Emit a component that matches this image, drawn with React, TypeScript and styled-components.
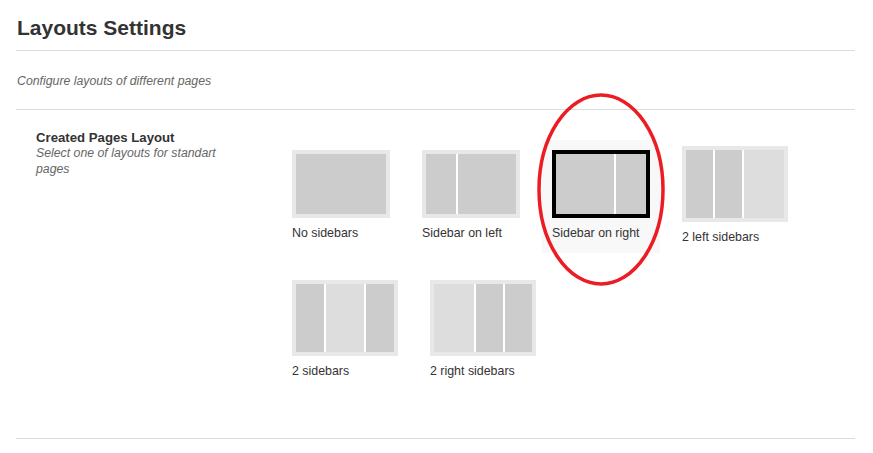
import React from "react";
import styled, { createGlobalStyle } from "styled-components";

type Panel = { w: number; kind: "side" | "main" };

type LayoutOption = {
  label: string;
  large?: boolean;
  selected?: boolean;
  panels: Panel[];
};

const layouts: LayoutOption[] = [
  { label: "No sidebars", panels: [{ w: 90, kind: "side" }] },
  {
    label: "Sidebar on left",
    panels: [
      { w: 30, kind: "side" },
      { w: 58, kind: "side" },
    ],
  },
  {
    label: "Sidebar on right",
    selected: true,
    panels: [
      { w: 58, kind: "side" },
      { w: 30, kind: "side" },
    ],
  },
  {
    label: "2 left sidebars",
    large: true,
    panels: [
      { w: 27, kind: "side" },
      { w: 27, kind: "side" },
      { w: 40, kind: "main" },
    ],
  },
  {
    label: "2 sidebars",
    large: true,
    panels: [
      { w: 28, kind: "side" },
      { w: 38, kind: "main" },
      { w: 28, kind: "side" },
    ],
  },
  {
    label: "2 right sidebars",
    large: true,
    panels: [
      { w: 40, kind: "main" },
      { w: 27, kind: "side" },
      { w: 27, kind: "side" },
    ],
  },
];

const App = () => {
  return (
    <>
      <GlobalStyle />
      <Page>
        <Title>Layouts Settings</Title>
        <Intro>Configure layouts of different pages</Intro>
        <Section>
          <SectionInfo>
            <SectionName>Created Pages Layout</SectionName>
            <SectionHint>Select one of layouts for standart pages</SectionHint>
          </SectionInfo>
          <Options>
            {layouts.map((item) => (
              <Option key={item.label} selected={item.selected}>
                <Thumb selected={item.selected}>
                  <Frame large={item.large}>
                    {item.panels.map((p, i) => (
                      <PanelBox key={i} kind={p.kind} style={{ width: p.w }} />
                    ))}
                  </Frame>
                </Thumb>
                <OptionLabel>{item.label}</OptionLabel>
                {item.selected && (
                  <Circle width="132" height="197" viewBox="0 0 132 197">
                    <ellipse
                      cx="66"
                      cy="98.5"
                      rx="62"
                      ry="94.5"
                      fill="none"
                      stroke="#ec1c24"
                      strokeWidth="3.5"
                    />
                  </Circle>
                )}
              </Option>
            ))}
          </Options>
        </Section>
      </Page>
    </>
  );
};

export default App;

const GlobalStyle = createGlobalStyle`
  body {
    margin: 0;
    background: #fff;
    font-family: "Liberation Sans", Arial, sans-serif;
  }
`;

const Page = styled.div`
  padding: 16px 18px 0 16px;
  width: 873px;
  box-sizing: border-box;
`;

const Title = styled.h1`
  margin: 0;
  padding: 0 0 10px 1px;
  font-size: 21px;
  line-height: 24px;
  font-weight: bold;
  color: #333;
  border-bottom: 1px solid #dcdcdc;
`;

const Intro = styled.p`
  margin: 0;
  padding: 22px 0 20px 1px;
  font-size: 12.3px;
  line-height: 16px;
  font-style: italic;
  color: #666;
  border-bottom: 1px solid #dcdcdc;
`;

const Section = styled.div`
  display: flex;
  padding: 20px 0 47px 20px;
  border-bottom: 1px solid #dcdcdc;
`;

const SectionInfo = styled.div`
  width: 246px;
  flex-shrink: 0;
`;

const SectionName = styled.div`
  font-size: 13.2px;
  line-height: 15px;
  font-weight: bold;
  color: #333;
`;

const SectionHint = styled.div`
  max-width: 190px;
  font-size: 12.3px;
  line-height: 16px;
  font-style: italic;
  color: #666;
`;

const Options = styled.div`
  display: flex;
  flex-wrap: wrap;
  align-items: center;
  gap: 13px 12px;
  margin-top: 6px;
  width: 540px;
`;

const Option = styled.div<{ selected?: boolean }>`
  position: relative;
  padding: 10px 10px 12px;
  background: ${({ selected }) => (selected ? "#f8f8f8" : "transparent")};
`;

const Thumb = styled.div<{ selected?: boolean }>`
  display: inline-block;
  padding: 4px;
  background: ${({ selected }) => (selected ? "#000" : "#e8e8e8")};
`;

const Frame = styled.div<{ large?: boolean }>`
  display: flex;
  gap: 2px;
  background: #fff;
  width: ${({ large }) => (large ? 98 : 90)}px;
  height: ${({ large }) => (large ? 68 : 60)}px;
`;

const PanelBox = styled.div<{ kind: "side" | "main" }>`
  flex-shrink: 0;
  height: 100%;
  background: ${({ kind }) => (kind === "main" ? "#dddddd" : "#cccccc")};
`;

const OptionLabel = styled.div`
  margin-top: 7px;
  font-size: 12.4px;
  line-height: 16px;
  color: #333;
  white-space: nowrap;
`;

const Circle = styled.svg`
  position: absolute;
  left: -7px;
  top: -49px;
  pointer-events: none;
`;
